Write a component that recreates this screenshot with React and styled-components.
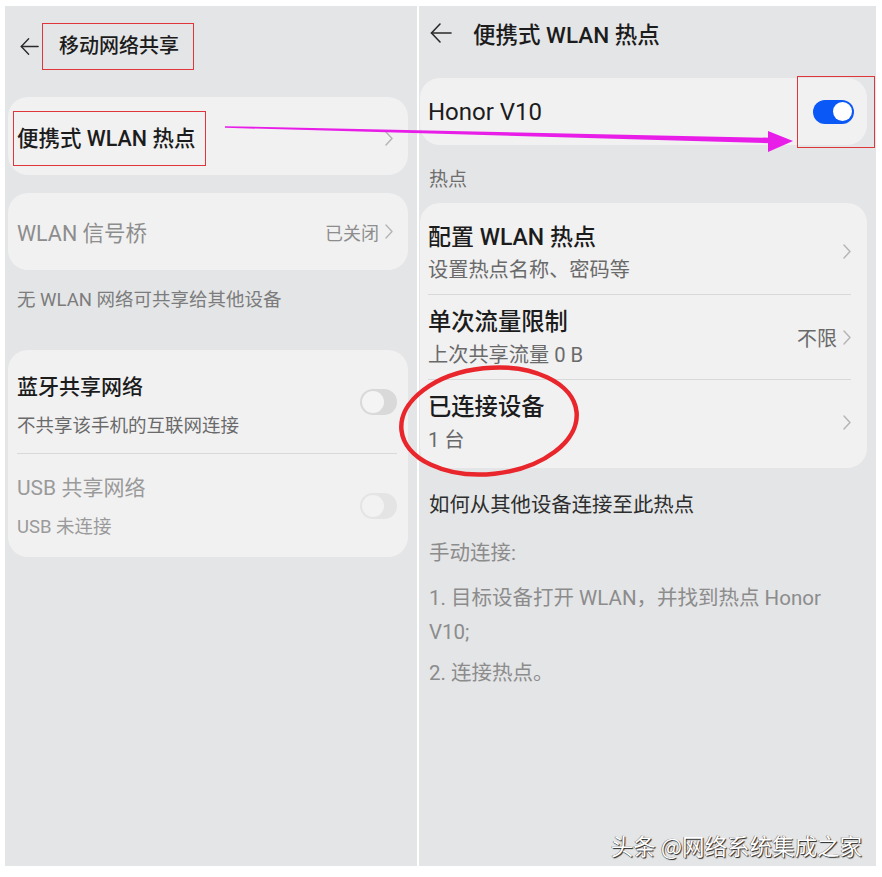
import React from "react";
import styled, { createGlobalStyle, css } from "styled-components";

const GlobalStyle = createGlobalStyle`
  html, body { margin: 0; padding: 0; background: #ffffff; }
  body { font-family: "Roboto", "Noto Sans CJK SC", sans-serif; }
  * { box-sizing: border-box; }
`;

const FONT = `"Roboto", "Noto Sans CJK SC", sans-serif`;

const Page = styled.div`
  position: relative;
  width: 882px;
  height: 877px;
  display: flex;
  gap: 2px;
  padding: 6px 0 0 5px;
  background: #ffffff;
  font-family: ${FONT};
`;

const Panel = styled.div`
  width: ${(p) => p.$w}px;
  height: 860px;
  background: #e4e5e7;
  display: flex;
  flex-direction: column;
  padding: 0 9px 0 ${(p) => p.$pl}px;
  overflow: hidden;
`;

const Header = styled.div`
  display: flex;
  align-items: center;
  height: ${(p) => p.$h}px;
  padding: ${(p) => p.$pt || 0}px 0 0 ${(p) => p.$pl}px;
  gap: ${(p) => p.$gap}px;
  color: #1e1e1e;
`;

const Title = styled.div`
  font-size: ${(p) => p.$size}px;
  font-weight: 500;
  color: #1c1c1c;
  white-space: nowrap;
  ${(p) =>
    p.$boxed &&
    css`
      border: 1px solid #e0353a;
      padding: 0 14px 0 16px;
      line-height: 45px;
    `}
`;

const Card = styled.div`
  background: #f1f1f2;
  border-radius: 20px;
  margin-top: ${(p) => p.$mt}px;
  padding: ${(p) => p.$pad};
  ${(p) => p.$h && `height: ${p.$h}px;`}
  display: flex;
  flex-direction: column;
`;

const SingleRow = styled.div`
  flex: 1;
  display: flex;
  align-items: center;
  justify-content: space-between;
`;

const BigLabel = styled.div`
  font-size: ${(p) => p.$size || 21.5}px;
  font-weight: ${(p) => (p.$weight ? p.$weight : p.$muted ? 400 : 500)};
  color: ${(p) => (p.$muted ? "#8d8d8d" : "#1c1c1c")};
  white-space: nowrap;
  ${(p) =>
    p.$boxed &&
    css`
      border: 1px solid #e0353a;
      padding: 0 10px 0 3px;
      line-height: 53px;
    `}
`;

const Trail = styled.div`
  display: flex;
  align-items: center;
  gap: 6px;
  font-size: ${(p) => p.$size || 19}px;
  color: ${(p) => p.$color || "#8a8a8a"};
  white-space: nowrap;
`;

const Row = styled.div`
  display: flex;
  align-items: center;
  justify-content: space-between;
  height: ${(p) => p.$h}px;
  ${(p) => p.$divider && `border-top: 1px solid #d9d9da;`}
`;

const TextBlock = styled.div`
  display: flex;
  flex-direction: column;
  align-self: flex-start;
  padding-top: ${(p) => p.$pt}px;
`;

const RowTitle = styled.div`
  font-size: ${(p) => p.$size}px;
  line-height: ${(p) => p.$lh}px;
  font-weight: ${(p) => (p.$muted ? 400 : 500)};
  color: ${(p) => (p.$muted ? "#9a9a9a" : "#1c1c1c")};
  white-space: nowrap;
`;

const RowSub = styled.div`
  font-size: ${(p) => p.$size}px;
  line-height: ${(p) => p.$lh}px;
  color: ${(p) => (p.$muted ? "#9a9a9a" : "#6a6a6a")};
  white-space: nowrap;
`;

const Caption = styled.div`
  margin-top: ${(p) => p.$mt}px;
  padding-left: ${(p) => p.$pl}px;
  font-size: ${(p) => p.$size}px;
  line-height: ${(p) => p.$lh}px;
  color: ${(p) => p.$color};
  white-space: ${(p) => (p.$wrap ? "normal" : "nowrap")};
  ${(p) => p.$maxw && `max-width: ${p.$maxw}px;`}
`;

const SwitchTrack = styled.div`
  position: relative;
  flex: none;
  width: ${(p) => (p.$on ? 41 : 37)}px;
  height: ${(p) => (p.$on ? 24 : 26)}px;
  border-radius: 13px;
  background: ${(p) => (p.$on ? "#0a59f7" : "#d9d9da")};
  opacity: ${(p) => (p.$disabled ? 0.5 : 1)};
`;

const SwitchKnob = styled.div`
  position: absolute;
  top: ${(p) => (p.$on ? 2.5 : 2)}px;
  ${(p) => (p.$on ? "right: 2.5px;" : "left: 2px;")}
  width: ${(p) => (p.$on ? 19 : 22)}px;
  height: ${(p) => (p.$on ? 19 : 22)}px;
  border-radius: 50%;
  background: ${(p) => (p.$on ? "#ffffff" : "#f4f4f4")};
`;

const SwitchWrap = styled.div`
  position: relative;
  display: flex;
`;

const Annotation = styled.div`
  position: absolute;
  left: -16px;
  right: -21px;
  top: -24px;
  bottom: -24px;
  border: 1px solid #e0353a;
  pointer-events: none;
`;

const Watermark = styled.div`
  margin-top: auto;
  align-self: flex-end;
  margin-right: 5px;
  margin-bottom: 6px;
  font-family: "Noto Sans CJK SC", sans-serif;
  font-size: 22.5px;
  line-height: 30px;
  color: #ffffff;
  text-shadow: 1px 1px 1px #222, -0.5px -0.5px 0 #555;
  white-space: nowrap;
`;

const Overlay = styled.svg`
  position: absolute;
  left: 0;
  top: 0;
  pointer-events: none;
`;

const Switch = ({ on, disabled, annotated }) => (
  <SwitchWrap>
    <SwitchTrack $on={on} $disabled={disabled}>
      <SwitchKnob $on={on} />
    </SwitchTrack>
    {annotated && <Annotation />}
  </SwitchWrap>
);

const Chevron = () => (
  <svg width="8" height="15" viewBox="0 0 8 15">
    <polyline points="1,1 7,7.5 1,14" fill="none" stroke="#b4b4b6" strokeWidth="1.4" strokeLinecap="round" strokeLinejoin="round" />
  </svg>
);

const BackArrow = ({ size }) => (
  <svg width={size} height={size} viewBox="0 0 22 22">
    <line x1="1.5" y1="11" x2="21" y2="11" stroke="#2a2a2a" strokeWidth="1.6" strokeLinecap="round" />
    <polyline points="10,2 1.5,11 10,20" fill="none" stroke="#2a2a2a" strokeWidth="1.6" strokeLinecap="round" strokeLinejoin="round" />
  </svg>
);

export default function App() {
  return (
    <>
      <GlobalStyle />
      <Page>
        <Panel $w={412} $pl={3}>
          <Header $h={64} $pt={17} $pl={12} $gap={3}>
            <BackArrow size={19} />
            <Title $size={20} $boxed>移动网络共享</Title>
          </Header>

          <Card $mt={27} $h={78} $pad="4px 15px 0 5px">
            <SingleRow>
              <BigLabel $boxed>便携式 WLAN 热点</BigLabel>
              <Chevron />
            </SingleRow>
          </Card>

          <Card $mt={18} $h={77} $pad="0 15px 0 9px">
            <SingleRow>
              <BigLabel $muted>WLAN 信号桥</BigLabel>
              <Trail $size={18} $color="#8d8d8d">
                已关闭
                <Chevron />
              </Trail>
            </SingleRow>
          </Card>

          <Caption $mt={15} $pl={9} $size={18.5} $lh={30} $color="#7c7c7c">
            无 WLAN 网络可共享给其他设备
          </Caption>

          <Card $mt={35} $pad="0 11px 0 9px">
            <Row $h={103}>
              <TextBlock $pt={18}>
                <RowTitle $size={21} $lh={39}>蓝牙共享网络</RowTitle>
                <RowSub $size={18.5} $lh={39}>不共享该手机的互联网连接</RowSub>
              </TextBlock>
              <Switch />
            </Row>
            <Row $h={104} $divider>
              <TextBlock $pt={15}>
                <RowTitle $size={21} $lh={39} $muted>USB 共享网络</RowTitle>
                <RowSub $size={18.5} $lh={38} $muted>USB 未连接</RowSub>
              </TextBlock>
              <Switch disabled />
            </Row>
          </Card>
        </Panel>

        <Panel $w={457} $pl={1}>
          <Header $h={54} $pl={10} $gap={21}>
            <BackArrow size={22} />
            <Title $size={22.5}>便携式 WLAN 热点</Title>
          </Header>

          <Card $mt={18} $h={67} $pad="0 13px 0 8px">
            <SingleRow>
              <BigLabel $size={24} $weight={400}>Honor V10</BigLabel>
              <Switch on annotated />
            </SingleRow>
          </Card>

          <Caption $mt={20} $pl={9} $size={19} $lh={30} $color="#6e6e6e">
            热点
          </Caption>

          <Card $mt={8} $pad="6px 16px 4px 8px">
            <Row $h={85}>
              <TextBlock $pt={11.5}>
                <RowTitle $size={23} $lh={33}>配置 WLAN 热点</RowTitle>
                <RowSub $size={20.2} $lh={33}>设置热点名称、密码等</RowSub>
              </TextBlock>
              <Chevron />
            </Row>
            <Row $h={85} $divider>
              <TextBlock $pt={11}>
                <RowTitle $size={23.3} $lh={33}>单次流量限制</RowTitle>
                <RowSub $size={20.2} $lh={33}>上次共享流量 0 B</RowSub>
              </TextBlock>
              <Trail $size={20} $color="#6a6a6a">
                不限
                <Chevron />
              </Trail>
            </Row>
            <Row $h={85} $divider>
              <TextBlock $pt={11}>
                <RowTitle $size={23.3} $lh={33}>已连接设备</RowTitle>
                <RowSub $size={20.2} $lh={33}>1 台</RowSub>
              </TextBlock>
              <Chevron />
            </Row>
          </Card>

          <Caption $mt={22} $pl={9} $size={20.4} $lh={30} $color="#2e2e2e">
            如何从其他设备连接至此热点
          </Caption>
          <Caption $mt={18} $pl={9} $size={20.5} $lh={30} $color="#8c8c8c">
            手动连接:
          </Caption>
          <Caption $mt={13} $pl={9} $size={20.5} $lh={34} $color="#8c8c8c" $wrap $maxw={425}>
            1. 目标设备打开 WLAN，并找到热点 Honor V10;
          </Caption>
          <Caption $mt={7} $pl={9} $size={20.5} $lh={34} $color="#8c8c8c">
            2. 连接热点。
          </Caption>

          <Watermark>头条 @网络系统集成之家</Watermark>
        </Panel>

        <Overlay width="882" height="877" viewBox="0 0 882 877">
          <polygon points="225,126.2 771,137.8 771,143.2 225,127.8" fill="#e81ee8" />
          <polygon points="768,131 793,141 768,152" fill="#e81ee8" />
          <ellipse cx="489" cy="421" rx="88" ry="53" fill="none" stroke="#e8262b" strokeWidth="4.5" transform="rotate(-6 489 421)" />
        </Overlay>
      </Page>
    </>
  );
}
